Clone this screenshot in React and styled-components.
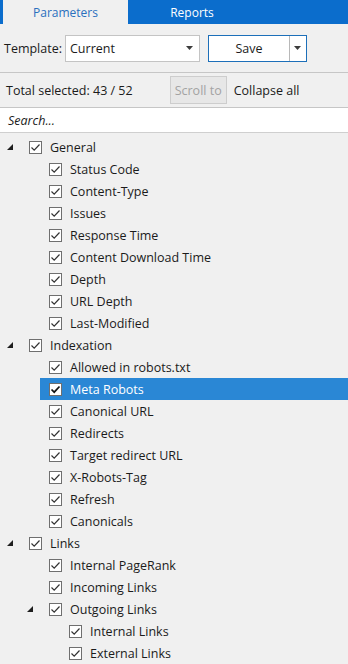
import React from 'react'
import styled, { createGlobalStyle } from 'styled-components'

const GlobalStyle = createGlobalStyle`
  html, body {
    margin: 0;
    padding: 0;
    background: #f0f0f0;
  }
  body {
    font-family: "Open Sans", "Noto Sans", sans-serif;
    font-size: 12px;
    color: #1b1b1b;
  }
`

const tree = [
  {
    label: 'General',
    children: [
      { label: 'Status Code' },
      { label: 'Content-Type' },
      { label: 'Issues' },
      { label: 'Response Time' },
      { label: 'Content Download Time' },
      { label: 'Depth' },
      { label: 'URL Depth' },
      { label: 'Last-Modified' },
    ],
  },
  {
    label: 'Indexation',
    children: [
      { label: 'Allowed in robots.txt' },
      { label: 'Meta Robots', selected: true },
      { label: 'Canonical URL' },
      { label: 'Redirects' },
      { label: 'Target redirect URL' },
      { label: 'X-Robots-Tag' },
      { label: 'Refresh' },
      { label: 'Canonicals' },
    ],
  },
  {
    label: 'Links',
    children: [
      { label: 'Internal PageRank' },
      { label: 'Incoming Links' },
      {
        label: 'Outgoing Links',
        children: [{ label: 'Internal Links' }, { label: 'External Links' }],
      },
    ],
  },
]

const Arrow = () => (
  <svg width="7" height="4" viewBox="0 0 7 4">
    <path d="M0 0 L7 0 L3.5 4 Z" fill="#3c3c3c" />
  </svg>
)

const Check = ({ selected }) => (
  <CheckBox>
    <svg width="11" height="11" viewBox="0 0 11 11">
      <path
        d="M1.5 5.5 L4.2 8.2 L9.5 2.5"
        fill="none"
        stroke={selected ? '#111' : '#333'}
        strokeWidth={selected ? 1.7 : 1.2}
      />
    </svg>
  </CheckBox>
)

const Expander = () => (
  <svg width="6" height="6" viewBox="0 0 6 6">
    <path d="M6 0 L6 6 L0 6 Z" fill="#1e1e1e" />
  </svg>
)

const rows = []
const walk = (nodes, level) => {
  nodes.forEach((n) => {
    rows.push({ ...n, level })
    if (n.children) walk(n.children, level + 1)
  })
}
walk(tree, 0)

const App = () => {
  return (
    <Page>
      <GlobalStyle />
      <Tabs>
        <Tab $active>Parameters</Tab>
        <Tab>Reports</Tab>
      </Tabs>
      <Toolbar>
        <span>Template:</span>
        <Select>
          <span>Current</span>
          <Arrow />
        </Select>
        <SaveButton>
          <SaveLabel>Save</SaveLabel>
          <SaveArrow>
            <Arrow />
          </SaveArrow>
        </SaveButton>
      </Toolbar>
      <StatusBar>
        <span>Total selected: 43 / 52</span>
        <GhostButton disabled>Scroll to</GhostButton>
        <span>Collapse all</span>
      </StatusBar>
      <Search>Search...</Search>
      <Tree>
        {rows.map((r) => (
          <Row key={r.label} $level={r.level}>
            <ExpandSlot>{r.children && <Expander />}</ExpandSlot>
            <Item $selected={r.selected}>
              <Check selected={r.selected} />
              <span>{r.label}</span>
            </Item>
          </Row>
        ))}
      </Tree>
    </Page>
  )
}

export default App

const Page = styled.div`
  width: 348px;
  height: 664px;
  overflow: hidden;
  background: #f0f0f0;
`

const Tabs = styled.div`
  display: flex;
  height: 24px;
  background: #0b6dcc;
  padding-left: 3px;
`

const Tab = styled.div`
  width: ${(p) => (p.$active ? '125px' : '128px')};
  display: flex;
  align-items: center;
  justify-content: center;
  font-size: 12px;
  background: ${(p) => (p.$active ? '#f0f0f0' : 'transparent')};
  color: ${(p) => (p.$active ? '#2a6fbe' : '#ffffff')};
`

const Toolbar = styled.div`
  display: flex;
  align-items: center;
  height: 48px;
  padding-left: 4px;
  border-bottom: 1px solid #c6c6c6;
  font-size: 12.5px;

  & > span {
    margin-right: 3px;
  }
`

const Select = styled.div`
  width: 123px;
  height: 25px;
  box-sizing: content-box;
  border: 1px solid #c4c4c4;
  background: #fff;
  display: flex;
  align-items: center;
  justify-content: space-between;
  padding: 0 6px 0 4px;
`

const SaveButton = styled.div`
  margin-left: 8px;
  width: 97px;
  height: 25px;
  border: 1px solid #1c6fb9;
  background: #fff;
  display: flex;
`

const SaveLabel = styled.div`
  flex: 1;
  display: flex;
  align-items: center;
  justify-content: center;
`

const SaveArrow = styled.div`
  width: 16px;
  border-left: 1px solid #b8b8b8;
  display: flex;
  align-items: center;
  justify-content: center;
`

const StatusBar = styled.div`
  display: flex;
  align-items: center;
  height: 34px;
  padding-left: 6px;
  border-bottom: 1px solid #c6c6c6;
  font-size: 12.5px;
`

const GhostButton = styled.button`
  margin: 0 7px 0 37px;
  height: 28px;
  padding: 0 4px;
  font: inherit;
  color: #a3a3a3;
  background: #e7e7e7;
  border: 1px solid #cdcdcd;
`

const Search = styled.div`
  height: 24px;
  background: #fff;
  border-bottom: 1px solid #cfcfcf;
  display: flex;
  align-items: center;
  padding-left: 8px;
  font-style: italic;
  font-size: 12.5px;
`

const Tree = styled.div`
  padding-top: 3px;
  font-size: 12.5px;
`

const Row = styled.div`
  display: flex;
  height: 22px;
  padding-left: ${(p) => p.$level * 20}px;
`

const ExpandSlot = styled.div`
  width: 20px;
  display: flex;
  align-items: center;
  justify-content: center;
`

const Item = styled.div`
  flex: 1;
  display: flex;
  align-items: center;
  padding-left: 9px;
  gap: 8px;
  background: ${(p) => (p.$selected ? '#2a87d5' : 'transparent')};
  color: ${(p) => (p.$selected ? '#ffffff' : 'inherit')};
`

const CheckBox = styled.span`
  width: 11px;
  height: 11px;
  border: 1px solid #6f6f6f;
  background: #fff;
  display: flex;
  align-items: center;
  justify-content: center;
`
